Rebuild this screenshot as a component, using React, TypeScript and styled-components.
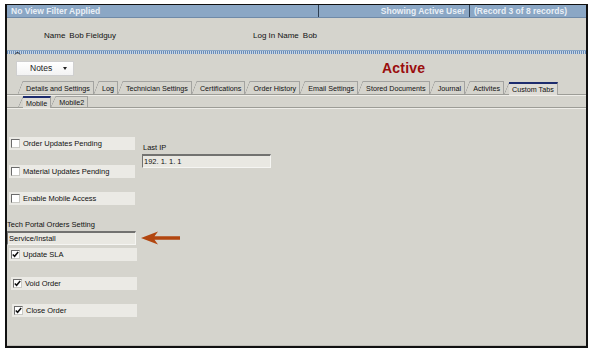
import React from 'react';
import styled, { createGlobalStyle } from 'styled-components';

const GlobalStyle = createGlobalStyle`
  body {
    margin: 0;
    background: #ffffff;
    font-family: "Liberation Sans", Tahoma, Arial, sans-serif;
    color: #111;
  }
`;

const Frame = styled.div`
  margin: 4px 0 0 5px;
  width: 583px;
  height: 344px;
  box-sizing: border-box;
  border: 2px solid #111;
  border-top: 1px solid #111;
  background: #d5d4cd;
  display: flex;
  flex-direction: column;
`;

const Header = styled.div`
  height: 12px;
  display: flex;
  background: #8ba7c5;
  border-bottom: 1px solid #6f8aa8;
  font-size: 8.5px;
  font-weight: bold;
  line-height: 12px;
  color: #e9eff6;
`;

const HeaderCell = styled.div<{ $w?: number; $align?: string; $sep?: boolean }>`
  width: ${({ $w }) => ($w ? `${$w}px` : 'auto')};
  flex: ${({ $w }) => ($w ? 'none' : '1')};
  text-align: ${({ $align }) => $align || 'left'};
  padding: 0 4px;
  box-sizing: border-box;
  border-right: ${({ $sep }) => ($sep ? '1px solid #2e3f52' : 'none')};
  white-space: nowrap;
`;

const NameRow = styled.div`
  height: 32px;
  display: flex;
  align-items: center;
  padding: 3px 0 0 37px;
  box-sizing: border-box;
  font-size: 8px;
`;

const NameGroup = styled.div<{ $w?: number }>`
  width: ${({ $w }) => ($w ? `${$w}px` : 'auto')};
  display: flex;
  gap: 4px;
`;

const Splitter = styled.div`
  height: 3px;
  border-top: 1px solid #8ba7c5;
  background: repeating-linear-gradient(90deg, #6a8db7 0 1px, #c9d6e6 1px 2px);
  display: flex;
  align-items: center;
  padding-left: 7px;
`;

const Toolbar = styled.div`
  height: 26px;
  display: flex;
  align-items: center;
  padding: 2px 0 0 9px;
  box-sizing: border-box;
`;

const NotesSelect = styled.div`
  width: 58px;
  height: 15px;
  box-sizing: border-box;
  background: linear-gradient(#ffffff, #f3f3f3);
  border: 1px solid #cfcfcf;
  display: flex;
  align-items: center;
  justify-content: space-between;
  padding: 0 6px 0 13px;
  font-size: 8.5px;
  color: #222;
`;

const Caret = styled.span`
  width: 0;
  height: 0;
  border-left: 2px solid transparent;
  border-right: 2px solid transparent;
  border-top: 3px solid #222;
`;

const Status = styled.div`
  margin-left: 308px;
  font-size: 14px;
  font-weight: bold;
  color: #9a0d0d;
  letter-spacing: 0.2px;
`;

const TabStrip = styled.div<{ $h: number }>`
  height: ${({ $h }) => $h}px;
  display: flex;
  align-items: flex-end;
  padding-left: 11px;
  border-bottom: 1px solid #9d9d97;
  box-shadow: 0 1px 0 #efeee9;
`;

const Tab = styled.div<{ $active?: boolean; $h: number }>`
  position: relative;
  height: ${({ $h }) => $h}px;
  box-sizing: border-box;
  margin-left: 5px;
  padding: 0 3px;
  display: flex;
  align-items: center;
  font-size: 7.2px;
  color: #111;
  white-space: nowrap;
  border-top: ${({ $active }) => ($active ? '2px solid #1d2c6e' : '1px solid #a3a3a0')};
  border-right: 1px solid #a3a3a0;
  background: ${({ $active }) => ($active ? '#dedcd6' : '#d5d4cd')};
  margin-bottom: ${({ $active }) => ($active ? '-1px' : '0')};

  &::before {
    content: '';
    position: absolute;
    left: -5px;
    top: -1px;
    bottom: 0;
    width: 5px;
    background: linear-gradient(
      to top left,
      transparent calc(50% - 0.6px),
      #a3a3a0 50%,
      transparent calc(50% + 0.6px)
    );
  }
`;

const Panel = styled.div`
  flex: 1;
  display: flex;
  border-bottom: 1px solid #bdbcb5;
`;

const LeftCol = styled.div`
  width: 135px;
  display: flex;
  flex-direction: column;
`;

const RightCol = styled.div`
  display: flex;
  flex-direction: column;
  padding-top: 35px;
`;

const CheckField = styled.div<{ $top: number; $indent: number; $w?: number }>`
  margin: ${({ $top }) => $top}px 0 0 ${({ $indent }) => $indent}px;
  width: ${({ $w }) => $w || 126}px;
  height: 13px;
  background: #ebeae5;
  display: flex;
  align-items: center;
  padding-left: 2px;
  box-sizing: border-box;
  font-size: 7.5px;
  gap: 3px;
`;

const Box = styled.span`
  width: 9px;
  height: 9px;
  box-sizing: border-box;
  background: #ffffff;
  border-top: 1px solid #6b6b6b;
  border-left: 1px solid #6b6b6b;
  border-right: 1px solid #c9c9c4;
  border-bottom: 1px solid #c9c9c4;
  display: flex;
  align-items: center;
  justify-content: center;
`;

const FieldLabel = styled.div<{ $top: number; $indent: number }>`
  margin: ${({ $top }) => $top}px 0 0 ${({ $indent }) => $indent}px;
  height: 10px;
  font-size: 7.5px;
  line-height: 10px;
`;

const InputRow = styled.div`
  display: flex;
  align-items: center;
  margin-top: 1px;
`;

const TextBox = styled.div<{ $w: number }>`
  flex: none;
  width: ${({ $w }) => $w}px;
  height: 14px;
  box-sizing: border-box;
  background: #e9e8e2;
  border-top: 2px solid #727270;
  border-left: 1px solid #727270;
  border-right: 1px solid #f5f5f2;
  border-bottom: 1px solid #f5f5f2;
  font-size: 7.5px;
  line-height: 11px;
  padding-left: 1px;
`;

const Arrow = styled.svg`
  flex: none;
  margin-left: 5px;
`;

const Check = ({ on }: { on?: boolean }) => (
  <Box>
    {on && (
      <svg width="7" height="7" viewBox="0 0 7 7">
        <path d="M0.8 3.4 L2.6 5.3 L6.2 1" fill="none" stroke="#111" strokeWidth="1.5" />
      </svg>
    )}
  </Box>
);

const tabs = [
  'Details and Settings',
  'Log',
  'Technician Settings',
  'Certifications',
  'Order History',
  'Email Settings',
  'Stored Documents',
  'Journal',
  'Activites',
  'Custom Tabs',
];

const App: React.FC = () => {
  return (
    <>
      <GlobalStyle />
      <Frame>
        <Header>
          <HeaderCell $w={312} $sep>No View Filter Applied</HeaderCell>
          <HeaderCell $w={151} $align="right" $sep>Showing Active User</HeaderCell>
          <HeaderCell>(Record 3 of 8 records)</HeaderCell>
        </Header>

        <NameRow>
          <NameGroup $w={209}>
            <span>Name</span>
            <span>Bob Fieldguy</span>
          </NameGroup>
          <NameGroup>
            <span>Log In Name</span>
            <span>Bob</span>
          </NameGroup>
        </NameRow>

        <Splitter>
          <svg width="7" height="4" viewBox="0 0 7 4">
            <path d="M1 3.5 L3.5 1 L6 3.5" fill="none" stroke="#222" strokeWidth="1" />
          </svg>
        </Splitter>

        <Toolbar>
          <NotesSelect>
            <span>Notes</span>
            <Caret />
          </NotesSelect>
          <Status>Active</Status>
        </Toolbar>

        <TabStrip $h={14}>
          {tabs.map((t) => (
            <Tab key={t} $h={13} $active={t === 'Custom Tabs'}>
              {t}
            </Tab>
          ))}
        </TabStrip>

        <TabStrip $h={12}>
          <Tab $h={12} $active>Mobile</Tab>
          <Tab $h={11}>Mobile2</Tab>
        </TabStrip>

        <Panel>
          <LeftCol>
            <CheckField $top={29} $indent={2}>
              <Check />
              Order Updates Pending
            </CheckField>
            <CheckField $top={15} $indent={2}>
              <Check />
              Material Updates Pending
            </CheckField>
            <CheckField $top={14} $indent={2}>
              <Check />
              Enable Mobile Access
            </CheckField>
            <FieldLabel $top={15} $indent={0}>Tech Portal Orders Setting</FieldLabel>
            <InputRow>
              <TextBox $w={129}>Service/Install</TextBox>
              <Arrow width="40" height="14" viewBox="0 0 40 14">
                <path d="M0 7 L17 0.5 L13.5 5.3 L39 5.3 L39 8.7 L13.5 8.7 L17 13.5 Z" fill="#b2460f" />
              </Arrow>
            </InputRow>
            <CheckField $top={3} $indent={2} $w={128}>
              <Check on />
              Update SLA
            </CheckField>
            <CheckField $top={16} $indent={4} $w={126}>
              <Check on />
              Void Order
            </CheckField>
            <CheckField $top={14} $indent={5} $w={125}>
              <Check on />
              Close Order
            </CheckField>
          </LeftCol>
          <RightCol>
            <FieldLabel $top={0} $indent={1}>Last IP</FieldLabel>
            <InputRow>
              <TextBox $w={129}>192. 1. 1. 1</TextBox>
            </InputRow>
          </RightCol>
        </Panel>
      </Frame>
    </>
  );
};

export default App;
